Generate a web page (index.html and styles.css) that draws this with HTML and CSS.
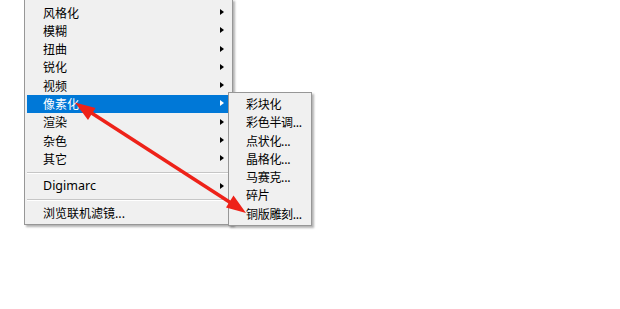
FILE: index.html
```html
<!DOCTYPE html>
<html lang="zh-CN">
  <head>
    <meta charset="UTF-8" />
    <title>滤镜菜单</title>
    <link rel="stylesheet" href="styles.css">
  </head>
  <body>
    <div class="stage">
      <div class="menu main">
        <div class="item sub">风格化</div>
        <div class="item sub">模糊</div>
        <div class="item sub">扭曲</div>
        <div class="item sub">锐化</div>
        <div class="item sub">视频</div>
        <div class="item sub on">像素化</div>
        <div class="item sub">渲染</div>
        <div class="item sub">杂色</div>
        <div class="item sub">其它</div>
        <div class="sep"></div>
        <div class="item sub latin">Digimarc</div>
        <div class="sep"></div>
        <div class="item">浏览联机滤镜...</div>
      </div>

      <div class="menu popup">
        <div class="item">彩块化</div>
        <div class="item">彩色半调...</div>
        <div class="item">点状化...</div>
        <div class="item">晶格化...</div>
        <div class="item">马赛克...</div>
        <div class="item">碎片</div>
        <div class="item">铜版雕刻...</div>
      </div>

      <!-- 标注箭头 -->
      <svg class="mark" width="620" height="309" viewBox="0 0 620 309">
        <line x1="90" y1="112" x2="231" y2="203" stroke="#ee2219" stroke-width="3.5" />
        <polygon points="75,102.5 88,120 95.5,108" fill="#ee2219" />
        <polygon points="246,213 226,207.5 233.5,195.5" fill="#ee2219" />
      </svg>
    </div>
  </body>
</html>
```

FILE: styles.css
```css
* {
  margin: 0;
  padding: 0;
  box-sizing: border-box;
}

body {
  background: #fff;
  font-family: "Noto Sans CJK SC", "Noto Sans", sans-serif;
  font-size: 12px;
  color: #000;
}

.stage {
  position: relative;
  display: flex;
  align-items: flex-start;
  width: 620px;
  height: 309px;
  padding-left: 24px;
  overflow: hidden;
}

.menu {
  background: #f0f0f0;
  border: 1px solid #979797;
  box-shadow: 2px 2px 2px rgba(0, 0, 0, 0.3);
}

.main {
  width: 209px;
  margin-top: -1px;
  padding: 3.5px 2px 1.5px;
}

.popup {
  position: relative;
  width: 84px;
  margin-top: 92px;
  margin-left: -5px;
  padding: 2px;
}

.item {
  position: relative;
  height: 18.3px;
  line-height: 18.3px;
  padding-left: 16px;
  white-space: nowrap;
}

.popup .item {
  padding-left: 15px;
  letter-spacing: -0.3px;
}

.item.latin {
  font-family: "Noto Sans", "Open Sans", sans-serif;
  font-size: 12.5px;
}

.item.sub::after {
  content: "";
  position: absolute;
  right: 6px;
  top: 5.5px;
  border-left: 4px solid #000;
  border-top: 3.5px solid transparent;
  border-bottom: 3.5px solid transparent;
}

.item.on {
  background: #0078d7;
  color: #fff;
}

.item.on::after {
  border-left-color: #fff;
}

.sep {
  height: 9px;
  position: relative;
}

.sep::before {
  content: "";
  position: absolute;
  left: 0;
  right: 0;
  top: 4px;
  height: 1px;
  background: #c6c6c6;
  border-bottom: 1px solid #fff;
  box-sizing: content-box;
}

.mark {
  position: absolute;
  top: 0;
  left: 0;
  pointer-events: none;
}
```
